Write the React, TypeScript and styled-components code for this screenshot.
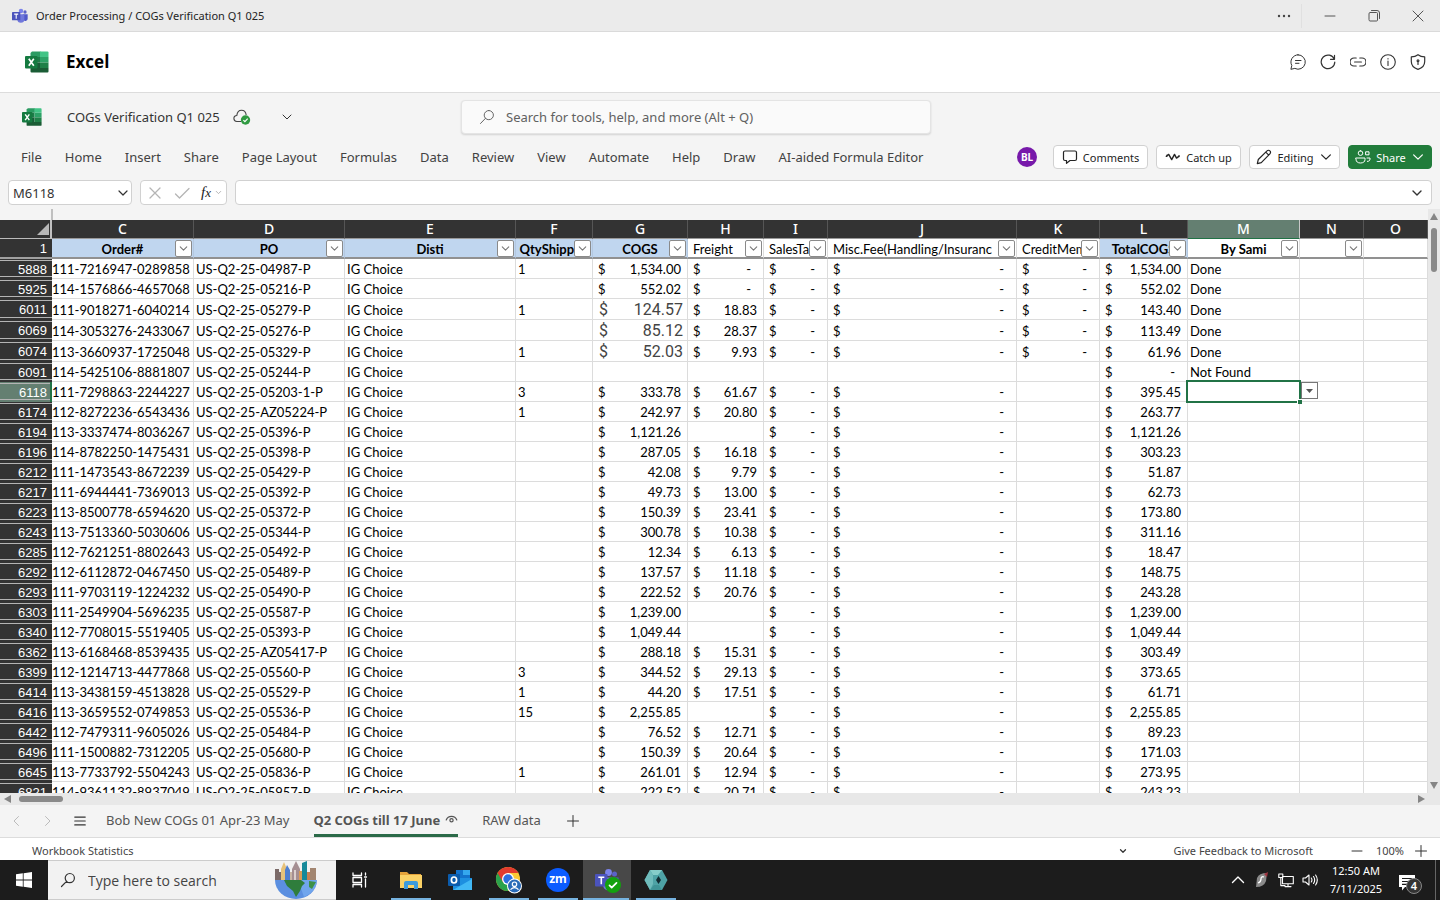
import React from "react";
import styled, { createGlobalStyle, css } from "styled-components";

const ui = `"Noto Sans", "Open Sans", sans-serif`;
const cellFont = `Lato, "Liberation Sans", sans-serif`;

const Global = createGlobalStyle`
  *, *::before, *::after { box-sizing: border-box; }
  body { margin: 0; background: #f4f4f4; font-family: ${ui}; color: #333; }
  button, input { font-family: inherit; color: inherit; }
  button { border: 0; background: none; padding: 0; cursor: pointer; }
  svg { display: block; flex: none; }
`;

/* ---------- icons ---------- */

type IconProps = { d: string; size?: number; w?: number; fill?: string; color?: string };

const Icon = ({ d, size = 16, w = 1, fill = "none", color = "currentColor" }: IconProps) => (
  <svg width={size} height={size} viewBox="0 0 16 16" fill={fill} stroke={color} strokeWidth={w} strokeLinecap="round" strokeLinejoin="round" aria-hidden>
    <path d={d} />
  </svg>
);

const paths = {
  down: "M4 6l4 4 4-4",
  wideDown: "M3 5.500l5 5 5-5",
  up: "M2.500 10.500L8 5l5.500 5.500",
  left: "M10.500 3.500L6 8l4.500 4.500",
  right: "M5.500 3.500L10 8l-4.500 4.500",
  cross: "M3 3l10 10M13 3L3 13",
  minus: "M3 8h10",
  plus: "M8 2.500v11M2.500 8h11",
  menu: "M2 3.500h12M2 8h12M2 12.500h12",
  search: "M9.800 1.500a4.600 4.600 0 1 1 0 9.200a4.600 4.600 0 0 1 0-9.200zM6.500 9.300L1.500 14.500",
  restore: "M3 5.500a1 1 0 0 1 1-1h6.500a1 1 0 0 1 1 1V12a1 1 0 0 1-1 1H4a1 1 0 0 1-1-1zM5.500 2.500H11a2.500 2.500 0 0 1 2.500 2.500v5.500",
  chat: "M8 .8a7.200 7.200 0 1 1-3.200 13.600L.9 15.300l.9-3.800A7.200 7.200 0 0 1 8 .8zM5.500 6.500h5.500M5.500 9.300h3.500",
  refresh: "M14.300 5.300A6.800 6.800 0 1 0 14.800 8M14.500 1.300v4h-4",
  link: "M6.200 4H4a4 4 0 0 0 0 8h2.200M9.800 4H12a4 4 0 0 1 0 8H9.800M4.600 8h6.800",
  info: "M8 .7a7.300 7.300 0 1 1 0 14.600A7.300 7.300 0 0 1 8 .7zM8 7v4.500M8 4.600v.3",
  shield: "M8 .7c2 1.500 4.200 2.100 6.700 2.200v4.600c0 4-2.300 6.500-6.700 7.900c-4.400-1.400-6.700-3.900-6.700-7.900V2.900C3.800 2.800 6 2.200 8 .7zM8 8v2.500M8 5.900a.9.9 0 1 1 0 1.800a.9.9 0 0 1 0-1.800z",
  comment: "M3 2h10a1.500 1.500 0 0 1 1.500 1.500v6.500a1.500 1.500 0 0 1-1.500 1.500H8L4.500 14.300v-2.800H3A1.500 1.500 0 0 1 1.500 10V3.500A1.500 1.500 0 0 1 3 2z",
  pulse: "M1.300 7.300L3.700 5.400l3 5.200L9.500 5.400l2 3.700 2.700-2M2 6.300v1M14 6.600v1",
  pencil: "M1.300 14.700l1-4.200L11 1.900a1.900 1.900 0 0 1 2.900 0a1.900 1.900 0 0 1 0 2.900L5.300 13.600zM9.800 3.200l2.900 2.900",
  check: "M1.500 9l4 4L15 3.500",
  people: "M5.500 1.800a2.300 2.300 0 1 1 0 4.600a2.300 2.300 0 0 1 0-4.600zM1 9h9v1.500c0 2.300-1.800 3.500-4.500 3.500S1 12.800 1 10.500zM11 2.800h3v3h-3zM12 9h3v1c0 1.600-1 2.400-2.600 2.400",
  eye: "M1.500 8.500a7 7 0 0 1 13 0M8 7a2 2 0 1 1 0 4a2 2 0 0 1 0-4z",
  taskview: "M1 1v2.500h8.500V1M1 15v-2.500h8.500V15M1 5.500h8.500v5H1zM13.500 1v2M13.500 7v8M12.500 5h2",
  network: "M4.500 4.500h10.800v7.300H4.500zM10 12v2.500M7 14.600h6M.8 2h4v3.500h-4zM2.800 5.600v8H7",
  speaker: "M1 6h2.500L7 3v10L3.500 10H1zM9.300 6q1.300 2 0 4M11.500 4.500q2.400 3.500 0 7M13.600 3q3.400 5 0 10",
};

const ExcelLogo = ({ size }: { size: number }) => (
  <svg width={size} height={size} viewBox="0 0 24 24" aria-label="Excel">
    <path d="M7 1.500h8.500V7H5.500V3z" fill="#2b9b62" />
    <path d="M15 1.500h7.500q1 0 1 1V7H15z" fill="#42c486" />
    <path d="M5.500 7H15v5.500H5.500z" fill="#1e7b48" />
    <path d="M15 7h8.500v5.500H15z" fill="#2da267" />
    <path d="M5.500 12.500H15V18H5.500z" fill="#185c37" />
    <path d="M15 12.500h8.500V18H15z" fill="#1f8048" />
    <path d="M5.500 18h18v3.500q0 1-1 1h-16q-1 0-1-1z" fill="#1a5c35" />
    <rect x="0" y="6" width="12.500" height="12.500" rx="1" fill="#157a40" />
    <path d="M3.800 8.800l5 7M8.800 8.800l-5 7" stroke="#fff" strokeWidth="1.700" />
  </svg>
);

const TeamsLogo = ({ size }: { size: number }) => (
  <svg width={size} height={size} viewBox="0 0 24 24" aria-label="Teams">
    <circle cx="19.500" cy="6" r="2.500" fill="#5b62c8" />
    <circle cx="13.500" cy="4.500" r="3.400" fill="#7b83eb" />
    <path d="M16 9.500h7.500v6.500a3.500 3.500 0 0 1-6 2.500z" fill="#5059c9" />
    <path d="M8 9.500h10.500v7.500a5.200 5.200 0 0 1-10.500 0z" fill="#7078dc" />
    <rect x="0" y="6" width="12.500" height="12.500" rx="1" fill="#4b53bc" />
    <path d="M3.300 9.200h6M6.300 9.200v7" stroke="#fff" strokeWidth="1.600" />
  </svg>
);

const CloudSaved = () => (
  <svg width="18" height="18" viewBox="0 0 18 18" aria-hidden>
    <path d="M8 13.500H4a3 3 0 0 1-.2-6C4.200 4 6.200 2.300 8.500 2.300S12.800 4 13.200 7" fill="none" stroke="#444" strokeWidth="1.100" />
    <circle cx="12.500" cy="12" r="4.700" fill="#2f9a41" />
    <path d="M10.400 12.200l1.500 1.500 2.800-3" fill="none" stroke="#fff" strokeWidth="1.200" />
  </svg>
);

const Globe = () => (
  <svg width="44" height="40" viewBox="0 0 44 40" aria-hidden>
    <path d="M1 20a21 19 0 0 0 42 0z" fill="#5b8fe0" />
    <path d="M24 20h19a21 19 0 0 1-13 17z" fill="#79aef2" opacity=".7" />
    <path d="M10 20h17l4 3-3 3-2 5-4 6-3-6-6-5z" fill="#2f7d3c" />
    <path d="M35 21l7 1-4 7-3-2z" fill="#3d9148" />
    <path d="M1 9h4v11H1zM5 12h3v8H5z" fill="#7b6a68" />
    <path d="M7 20V9l3-7 3 7v11z" fill="#e7c27a" />
    <path d="M11 20V10l2-5 3 5v10z" fill="#4f7fd0" />
    <path d="M16 20v-8h3v8z" fill="#c9b6a6" />
    <path d="M18 20V9l4-8 4 8v11z" fill="#a58f92" />
    <path d="M20 20V10h2v10z" fill="#dcd0cd" />
    <path d="M25 20v-9h4v9z" fill="#d99a55" />
    <path d="M28 20V3l5-2v19z" fill="#16899a" />
    <path d="M33 20V12h3v8z" fill="#c77f52" />
    <path d="M36 20V8h6v12z" fill="#a28570" />
  </svg>
);

const Folder = () => (
  <svg width="24" height="24" viewBox="0 0 24 24" aria-hidden>
    <path d="M1 4h7l2 2h12v4H1z" fill="#e5a33a" />
    <path d="M1 7h22v13H1z" fill="#fbd266" />
    <path d="M5 21v-6q0-2 2-2h10q2 0 2 2v6h-4v-4H9v4z" fill="#3d9bdc" />
  </svg>
);

const Outlook = () => (
  <svg width="26" height="24" viewBox="0 0 26 24" aria-hidden>
    <path d="M9 2h14v9H9z" fill="#1373cc" />
    <path d="M16 2h7v5h-7z" fill="#35a8ee" />
    <path d="M6 10h19v12H6z" fill="#1d8fe0" />
    <path d="M6 22l19-11v11z" fill="#41b8f5" />
    <rect x="1" y="6" width="12" height="12" rx="1" fill="#0b5cad" />
    <ellipse cx="7" cy="12" rx="2.600" ry="3" fill="none" stroke="#fff" strokeWidth="1.700" />
  </svg>
);

const Chrome = () => (
  <svg width="28" height="28" viewBox="0 0 28 28" aria-hidden>
    <circle cx="13" cy="13" r="12" fill="#fbc934" />
    <path d="M2.600 7A12 12 0 0 0 13 25l5.200-9L13 13z" fill="#2ba24c" />
    <path d="M2.600 7A12 12 0 0 1 23.400 7H13l-5.200 9z" fill="#e33b2e" />
    <circle cx="13" cy="13" r="6" fill="#fff" />
    <circle cx="13" cy="13" r="4.700" fill="#2f6fe0" />
    <circle cx="19.500" cy="20" r="7.500" fill="#fff" />
    <circle cx="19.500" cy="20" r="6.500" fill="#2b6cb8" />
    <circle cx="19.500" cy="18.200" r="2.200" fill="none" stroke="#fff" strokeWidth="1.200" />
    <path d="M15.500 23.700q4-4 8 0" fill="none" stroke="#fff" strokeWidth="1.200" />
  </svg>
);

const Hex = () => (
  <svg width="24" height="22" viewBox="0 0 24 22" aria-hidden>
    <path d="M6 1h12l5.500 10L18 21H6L.5 11z" fill="#4ea3a6" />
    <path d="M6 1h12l-4 5h-5z" fill="#86cdca" />
    <path d="M.5 11L6 1l3 5v9l-3 6z" fill="#6fbcbc" />
    <path d="M18 21H6l4-5h5z" fill="#3f9497" />
    <path d="M14.500 7l2.500 4-2.500 4-2.500-4z" fill="#122c33" />
  </svg>
);

const Windows = () => (
  <svg width="16" height="16" viewBox="0 0 16 16" fill="#fff" aria-hidden>
    <path d="M0 2.300L6.800 1.300v6.300H0zM7.600 1.200L16 0v7.600H7.600zM0 8.400h6.800v6.300L0 13.700zM7.600 8.400H16V16l-8.400-1.200z" />
  </svg>
);

const Feather = () => (
  <svg width="16" height="18" viewBox="0 0 16 18" aria-hidden>
    <path d="M2 16L3 7q2-5 10-5l-1 8q-2 6-10 6z" fill="#8a8a8a" />
    <path d="M10 3l4-2-1 5z" fill="#a03540" />
    <path d="M10 6q-3-1-3 2t-3 4" fill="none" stroke="#fff" strokeWidth="1.300" />
  </svg>
);

const Notice = () => (
  <svg width="18" height="17" viewBox="0 0 18 17" aria-hidden>
    <path d="M1 1h16v12H7l-3 3.500V13H1z" fill="#fff" />
    <path d="M4 4.500h10M4 7.500h10M4 10.300h6" stroke="#1c1c1c" strokeWidth="1.200" />
  </svg>
);

/* ---------- window chrome ---------- */

const Page = styled.div`
  display: flex;
  flex-direction: column;
  height: 100vh;
  overflow: hidden;
`;

const TitleBar = styled.header`
  display: flex;
  align-items: center;
  flex: none;
  height: 32px;
  padding: 0 6px 0 12px;
  gap: 8px;
  background: #ebebeb;
  border-bottom: 1px solid #dadada;
  font-size: 11px;
  color: #242424;
`;

const Spacer = styled.div`
  flex: 1;
`;

const WindowButtons = styled.div`
  display: flex;
  align-items: center;
  gap: 12px;
`;

const WindowButton = styled.button`
  display: flex;
  align-items: center;
  justify-content: center;
  width: 32px;
  height: 24px;
  color: #555;
`;

const MoreButton = styled(WindowButton)`
  width: 36px;
  border-right: 1px solid #e0e0e0;
`;

const AppBar = styled.div`
  display: flex;
  align-items: center;
  flex: none;
  height: 61px;
  padding: 0 14px 1px 25px;
  gap: 17px;
  background: #fff;
  border-bottom: 1px solid #dcdcdc;
`;

const AppName = styled.h1`
  margin: 0;
  font-family: "Open Sans", sans-serif;
  font-size: 17px;
  line-height: 24px;
  font-weight: 700;
  color: #000;
`;

const AppActions = styled.div`
  display: flex;
  gap: 14px;
`;

const IconButton = styled.button<{ $w?: number; $tone?: string }>`
  display: flex;
  align-items: center;
  justify-content: center;
  width: ${(p) => p.$w ?? 16}px;
  height: 16px;
  color: ${(p) => p.$tone ?? "#333"};
`;

const DocBar = styled.div`
  display: grid;
  grid-template-columns: 1fr 470px 1fr;
  align-items: center;
  flex: none;
  height: 49px;
  padding: 0 70px 1px 22px;
`;

const DocInfo = styled.div`
  display: flex;
  align-items: center;
  font-size: 13px;
  color: #333;
`;

const DocName = styled.span`
  margin: 0 13px 0 25px;
  white-space: nowrap;
`;

const DocMenu = styled(IconButton)`
  margin-left: 28px;
`;

const SearchBox = styled.label`
  display: flex;
  align-items: center;
  gap: 11px;
  height: 34px;
  padding: 0 17px;
  border: 1px solid #e4e4e4;
  border-radius: 4px;
  background: #fafafa;
  box-shadow: 0 1px 2px rgba(0, 0, 0, 0.14);
  color: #666;
`;

const PlainInput = styled.input<{ $size: number }>`
  flex: 1;
  min-width: 0;
  padding: 0;
  border: 0;
  outline: 0;
  background: transparent;
  font-size: ${(p) => p.$size}px;
  &::placeholder { color: #616161; opacity: 1; }
`;

const Ribbon = styled.div`
  display: flex;
  align-items: center;
  flex: none;
  height: 30px;
  padding: 0 8px 0 21px;
  gap: 8px;
`;

const RibbonTabs = styled.nav`
  display: flex;
  gap: 23px;
  flex: 1;
`;

const RibbonTab = styled.button`
  font-size: 13px;
  color: #424242;
  white-space: nowrap;
`;

const Avatar = styled.span`
  display: flex;
  align-items: center;
  justify-content: center;
  width: 20px;
  height: 20px;
  margin-right: 8px;
  border-radius: 50%;
  background: #7719aa;
  color: #fff;
  font-size: 10px;
  font-weight: 700;
`;

const ActionButton = styled.button<{ $w: number; $primary?: boolean }>`
  display: flex;
  align-items: center;
  justify-content: center;
  gap: 5px;
  width: ${(p) => p.$w}px;
  height: 24px;
  border: 1px solid #d1d1d1;
  border-radius: 4px;
  background: #fff;
  font-size: 11px;
  color: #242424;
  white-space: nowrap;
  ${(p) =>
    p.$primary &&
    css`
      background: #217c3b;
      border-color: #217c3b;
      color: #fff;
    `}
`;

const FormulaRow = styled.div`
  display: flex;
  flex: none;
  gap: 8px;
  padding: 8px 8px 4px;
`;

const Box = styled.div<{ $w?: number }>`
  display: flex;
  align-items: center;
  height: 25px;
  ${(p) => (p.$w ? `width: ${p.$w}px;` : "flex: 1;")}
  padding: 0 4px;
  border: 1px solid #d1d1d1;
  border-radius: 4px;
  background: #fff;
`;

const FxTools = styled(Box)`
  gap: 11px;
  padding: 0 2px 0 6px;
`;

const FxGroup = styled.span`
  display: flex;
  align-items: center;
  gap: 2px;
`;

const Fx = styled.span`
  font-family: "Liberation Serif", serif;
  font-style: italic;
  font-size: 15px;
  line-height: 16px;
  color: #222;
  small { font-size: 13px; }
`;

/* ---------- grid ---------- */

const SheetArea = styled.main`
  display: flex;
  flex: 1;
  min-height: 0;
`;

const SheetPane = styled.div`
  flex: 1;
  min-width: 0;
  overflow: hidden;
`;

const FreezeStub = styled.div`
  width: 53px;
  height: 11px;
  border-right: 2px solid #c0c0c0;
`;

const Sheet = styled.table`
  width: 100%;
  table-layout: fixed;
  border-collapse: separate;
  border-spacing: 0;
  background: #fff;
  font-family: ${cellFont};
  font-size: 13px;
  line-height: 16px;
  color: #000;
`;

const ColLetter = styled.th<{ $on?: boolean }>`
  height: 19px;
  padding: 0;
  background: ${(p) => (p.$on ? "#647f71" : "#333")};
  border-right: 1px solid ${(p) => (p.$on ? "#c8c8c8" : "#555")};
  border-bottom: 1px solid ${(p) => (p.$on ? "#217346" : "#999")};
  color: #fff;
  font-family: ${ui};
  font-size: 14px;
  font-weight: 500;
`;

const Corner = styled.th`
  padding: 0;
  background: #333;
  border-right: 2px solid #c0c0c0;
  border-bottom: 1px solid #bbb;
  svg { margin-left: auto; }
`;

const RowNumber = styled.th<{ $on?: boolean; $top?: boolean }>`
  padding: 1px ${(p) => (p.$on ? 3 : 5)}px 0 0;
  text-align: right;
  color: #fff;
  font-family: "Liberation Sans", Arial, sans-serif;
  font-size: 13px;
  font-weight: 400;
  background-color: ${(p) => (p.$on ? "#647f71" : "#333")};
  ${(p) =>
    p.$top
      ? css`
          border-bottom: 2px solid #a0a0a0;
        `
      : css`
          background-image: linear-gradient(#b4b4b4, #b4b4b4), linear-gradient(#b4b4b4, #b4b4b4);
          background-size: 100% 1px;
          background-repeat: no-repeat;
          background-position: 0 1px, 0 calc(100% - 2px);
        `}
  ${(p) => p.$on && "border-right: 2px solid #217346;"}
`;

const HeadCell = styled.td<{ $fill?: boolean; $bold?: boolean }>`
  position: relative;
  height: 20px;
  padding: 1px 0 0 5px;
  overflow: hidden;
  white-space: nowrap;
  border-right: 1px solid ${(p) => (p.$fill ? "#b4c8e0" : "#dcdcdc")};
  border-bottom: 2px solid #919191;
  background: ${(p) => (p.$fill ? "#c0d6ef" : "#fff")};
  ${(p) =>
    p.$bold &&
    css`
      padding: 1px 0 0;
      text-align: center;
      font-weight: 700;
    `}
`;

const FilterButton = styled.button`
  position: absolute;
  right: 1px;
  top: 1px;
  display: flex;
  align-items: center;
  justify-content: center;
  width: 17px;
  height: 17px;
  border: 1px solid #8a8a8a;
  border-radius: 2px;
  background: #fff;
  color: #777;
`;

const Row = styled.tr<{ $h: number }>`
  height: ${(p) => p.$h}px;
`;

const Cell = styled.td<{ $right?: boolean; $flush?: boolean; $visible?: boolean }>`
  position: relative;
  padding: ${(p) => (p.$flush ? "0 0 1px" : p.$right ? "0 4px 1px 0" : "0 0 1px 2px")};
  text-align: ${(p) => (p.$right ? "right" : "left")};
  vertical-align: bottom;
  white-space: nowrap;
  overflow: ${(p) => (p.$visible ? "visible" : "hidden")};
  border-right: 1px solid #dcdcdc;
  border-bottom: 1px solid #dcdcdc;
`;

const Money = styled.div<{ $dash?: boolean; $big?: boolean }>`
  display: flex;
  justify-content: space-between;
  padding: 0 ${(p) => (p.$dash ? 12 : 6)}px 0 5px;
  ${(p) =>
    p.$big &&
    css`
      padding: 0 4px 0 6px;
      font-family: Roboto, sans-serif;
      font-size: 16px;
      color: #444;
    `}
`;

const Selection = styled.div`
  position: absolute;
  z-index: 1;
  inset: -2px;
  border: 2px solid #217346;
  &::after {
    content: "";
    position: absolute;
    right: -3px;
    bottom: -3px;
    width: 5px;
    height: 5px;
    background: #217346;
    border: 1px solid #fff;
    border-width: 1px 0 0 1px;
  }
`;

const PickButton = styled.button`
  position: absolute;
  z-index: 2;
  left: calc(100% + 2px);
  top: 0;
  display: flex;
  align-items: center;
  justify-content: center;
  width: 17px;
  height: 17px;
  border: 1px solid #777;
  background: #fff;
`;

const Track = styled.div<{ $row?: boolean }>`
  display: flex;
  flex: none;
  flex-direction: ${(p) => (p.$row ? "row" : "column")};
  align-items: center;
  justify-content: space-between;
  ${(p) => (p.$row ? "height: 12px; padding: 0 15px 0 4px;" : "width: 12px; padding: 4px 0;")}
  background: #e8e8e8;
`;

const TrackStart = styled(Track)`
  padding: 0;
  gap: 7px;
  background: none;
`;

const Thumb = styled.div<{ $row?: boolean }>`
  width: ${(p) => (p.$row ? 44 : 6)}px;
  height: ${(p) => (p.$row ? 6 : 44)}px;
  border-radius: 3px;
  background: #8a8a8a;
`;

const Arrow = ({ d }: { d: string }) => (
  <svg width="8" height="8" viewBox="0 0 8 8" fill="#858585" aria-hidden>
    <path d={d} />
  </svg>
);

/* ---------- footer ---------- */

const TabBar = styled.div`
  display: flex;
  align-items: center;
  flex: none;
  height: 33px;
  padding: 0 8px;
  border-bottom: 1px solid #dcdcdc;
`;

const TabNav = styled.div`
  display: flex;
  align-items: center;
  gap: 16px;
  margin-right: 18px;
`;

const SheetTab = styled.button<{ $on?: boolean }>`
  display: flex;
  align-items: center;
  gap: 5px;
  height: 32px;
  margin-right: 24px;
  border-bottom: 3px solid ${(p) => (p.$on ? "#2b6a48" : "transparent")};
  font-size: 13px;
  font-weight: ${(p) => (p.$on ? 700 : 400)};
  color: #555;
  white-space: nowrap;
`;

const StatusBar = styled.div`
  display: flex;
  align-items: center;
  flex: none;
  height: 22px;
  padding: 3px 11px 0 32px;
  background: #fff;
  font-size: 11px;
  color: #444;
`;

const StatusLink = styled.button`
  margin: 0 36px 0 46px;
  font-size: 11px;
`;

const Zoom = styled.span`
  margin: 0 9px 0 11px;
`;

const Taskbar = styled.footer`
  display: flex;
  flex: none;
  height: 40px;
  background: #1c1c1c;
  color: #fff;
`;

const TaskButton = styled.button<{ $open?: boolean; $active?: boolean }>`
  position: relative;
  display: flex;
  align-items: center;
  justify-content: center;
  width: 48px;
  height: 40px;
  background: ${(p) => (p.$active ? "#484848" : "none")};
  ${(p) =>
    p.$open &&
    css`
      &::after {
        content: "";
        position: absolute;
        left: ${p.$active ? 0 : 4}px;
        right: ${p.$active ? 2 : 4}px;
        bottom: 0;
        height: 2px;
        background: #76b3e0;
      }
    `}
`;

const Apps = styled.div`
  display: flex;
  gap: 1px;
  margin-left: 3px;
`;

const TaskSearch = styled.label`
  display: flex;
  align-items: center;
  width: 288px;
  gap: 12px;
  padding: 0 18px 0 12px;
  background: #f2f2f2;
  border: 1px solid #ccc;
  border-width: 1px 0;
  font-family: "Open Sans", sans-serif;
  color: #333;
  input::placeholder { color: #444; }
`;

const Tray = styled.div`
  display: flex;
  align-items: center;
  gap: 8px;
`;

const Clock = styled.div`
  width: 60px;
  text-align: center;
  font-size: 11px;
  line-height: 18px;
`;

const NoticeButton = styled.button`
  position: relative;
  width: 24px;
  height: 24px;
  margin: 0 13px 0 4px;
  padding-top: 4px;
`;

const NoticeCount = styled.span`
  position: absolute;
  left: 8px;
  top: 10px;
  width: 16px;
  height: 16px;
  border: 1px solid #888;
  border-radius: 50%;
  background: #333;
  color: #fff;
  font-size: 11px;
  line-height: 14px;
  font-weight: 600;
  text-align: center;
`;

const DesktopEdge = styled.div`
  width: 5px;
  border-left: 1px solid #666;
`;

const ZoomMark = styled.span`
  display: flex;
  align-items: center;
  justify-content: center;
  width: 24px;
  height: 24px;
  border-radius: 50%;
  background: #0b5cff;
  font-size: 12px;
  font-weight: 700;
  line-height: 20px;
  padding-bottom: 3px;
`;

const Presence = styled.span`
  position: absolute;
  left: 22px;
  top: 17px;
  display: flex;
  align-items: center;
  justify-content: center;
  width: 16px;
  height: 16px;
  border-radius: 50%;
  background: #13a10e;
`;

/* ---------- data ---------- */

const menu = ["File", "Home", "Insert", "Share", "Page Layout", "Formulas", "Data", "Review", "View", "Automate", "Help", "Draw", "AI-aided Formula Editor"];

const columns: { letter: string; width?: number; title: string; fill?: boolean; bold?: boolean; filter?: boolean }[] = [
  { letter: "C", width: 142, title: "Order#", fill: true, bold: true, filter: true },
  { letter: "D", width: 151, title: "PO", fill: true, bold: true, filter: true },
  { letter: "E", width: 171, title: "Disti", fill: true, bold: true, filter: true },
  { letter: "F", width: 77, title: "QtyShipped", fill: true, bold: true, filter: true },
  { letter: "G", width: 95, title: "COGS", fill: true, bold: true, filter: true },
  { letter: "H", width: 76, title: "Freight", filter: true },
  { letter: "I", width: 64, title: "SalesTax", filter: true },
  { letter: "J", width: 189, title: "Misc.Fee(Handling/Insuranc", filter: true },
  { letter: "K", width: 83, title: "CreditMemo", filter: true },
  { letter: "L", width: 88, title: "TotalCOGS", fill: true, bold: true, filter: true },
  { letter: "M", width: 112, title: "By Sami", bold: true, filter: true },
  { letter: "N", width: 64, title: "", filter: true },
  { letter: "O", title: "" },
];

// row, order, po, qty, cogs, freight, salesTax, misc, credit, total, by
const rows: string[][] = [
  ["5888", "111-7216947-0289858", "04987-P", "1", "1,534.00", "-", "-", "-", "-", "1,534.00", "Done"],
  ["5925", "114-1576866-4657068", "05216-P", "", "552.02", "-", "-", "-", "-", "552.02", "Done"],
  ["6011", "111-9018271-6040214", "05279-P", "1", "124.57", "18.83", "-", "-", "-", "143.40", "Done"],
  ["6069", "114-3053276-2433067", "05276-P", "", "85.12", "28.37", "-", "-", "-", "113.49", "Done"],
  ["6074", "113-3660937-1725048", "05329-P", "1", "52.03", "9.93", "-", "-", "-", "61.96", "Done"],
  ["6091", "114-5425106-8881807", "05244-P", "", "", "", "", "", "", "-", "Not Found"],
  ["6118", "111-7298863-2244227", "05203-1-P", "3", "333.78", "61.67", "-", "-", "", "395.45", ""],
  ["6174", "112-8272236-6543436", "AZ05224-P", "1", "242.97", "20.80", "-", "-", "", "263.77", ""],
  ["6194", "113-3337474-8036267", "05396-P", "", "1,121.26", "", "-", "-", "", "1,121.26", ""],
  ["6196", "114-8782250-1475431", "05398-P", "", "287.05", "16.18", "-", "-", "", "303.23", ""],
  ["6212", "111-1473543-8672239", "05429-P", "", "42.08", "9.79", "-", "-", "", "51.87", ""],
  ["6217", "111-6944441-7369013", "05392-P", "", "49.73", "13.00", "-", "-", "", "62.73", ""],
  ["6223", "113-8500778-6594620", "05372-P", "", "150.39", "23.41", "-", "-", "", "173.80", ""],
  ["6243", "113-7513360-5030606", "05344-P", "", "300.78", "10.38", "-", "-", "", "311.16", ""],
  ["6285", "112-7621251-8802643", "05492-P", "", "12.34", "6.13", "-", "-", "", "18.47", ""],
  ["6292", "112-6112872-0467450", "05489-P", "", "137.57", "11.18", "-", "-", "", "148.75", ""],
  ["6293", "111-9703119-1224232", "05490-P", "", "222.52", "20.76", "-", "-", "", "243.28", ""],
  ["6303", "111-2549904-5696235", "05587-P", "", "1,239.00", "", "-", "-", "", "1,239.00", ""],
  ["6340", "112-7708015-5519405", "05393-P", "", "1,049.44", "", "-", "-", "", "1,049.44", ""],
  ["6362", "113-6168468-8539435", "AZ05417-P", "", "288.18", "15.31", "-", "-", "", "303.49", ""],
  ["6399", "112-1214713-4477868", "05560-P", "3", "344.52", "29.13", "-", "-", "", "373.65", ""],
  ["6414", "113-3438159-4513828", "05529-P", "1", "44.20", "17.51", "-", "-", "", "61.71", ""],
  ["6416", "113-3659552-0749853", "05536-P", "15", "2,255.85", "", "-", "-", "", "2,255.85", ""],
  ["6442", "112-7479311-9605026", "05484-P", "", "76.52", "12.71", "-", "-", "", "89.23", ""],
  ["6496", "111-1500882-7312205", "05680-P", "", "150.39", "20.64", "-", "-", "", "171.03", ""],
  ["6645", "113-7733792-5504243", "05836-P", "1", "261.01", "12.94", "-", "-", "", "273.95", ""],
  ["6821", "114-9361132-8937049", "05957-P", "", "222.52", "20.71", "-", "-", "", "243.23", ""],
];

const tallRows = ["6011", "6069", "6074"];
const activeRow = "6118";
const activeColumn = "M";

const MoneyCell = ({ value, big }: { value: string; big?: boolean }) => (
  <Cell $flush>
    {value && (
      <Money $dash={value === "-"} $big={big}>
        <span>$</span>
        <span>{value}</span>
      </Money>
    )}
  </Cell>
);

export default function App() {
  return (
    <Page>
      <Global />
      <TitleBar>
        <TeamsLogo size={16} />
        <span>Order Processing / COGs Verification Q1 025</span>
        <Spacer />
        <WindowButtons>
          <MoreButton aria-label="More">
            <svg width="16" height="16" viewBox="0 0 16 16" fill="#444" aria-hidden>
              <circle cx="3" cy="8" r="1.200" />
              <circle cx="8" cy="8" r="1.200" />
              <circle cx="13" cy="8" r="1.200" />
            </svg>
          </MoreButton>
          <WindowButton aria-label="Minimize"><Icon d={paths.minus} /></WindowButton>
          <WindowButton aria-label="Restore"><Icon d={paths.restore} /></WindowButton>
          <WindowButton aria-label="Close"><Icon d={paths.cross} /></WindowButton>
        </WindowButtons>
      </TitleBar>

      <AppBar>
        <ExcelLogo size={24} />
        <AppName>Excel</AppName>
        <Spacer />
        <AppActions>
          <IconButton aria-label="Chat"><Icon d={paths.chat} /></IconButton>
          <IconButton aria-label="Reload"><Icon d={paths.refresh} w={1.2} /></IconButton>
          <IconButton aria-label="Copy link"><Icon d={paths.link} w={1.2} /></IconButton>
          <IconButton aria-label="About"><Icon d={paths.info} w={1.1} /></IconButton>
          <IconButton aria-label="Privacy"><Icon d={paths.shield} w={1.2} /></IconButton>
        </AppActions>
      </AppBar>

      <DocBar>
        <DocInfo>
          <ExcelLogo size={20} />
          <DocName>COGs Verification Q1 025</DocName>
          <CloudSaved />
          <DocMenu aria-label="File details"><Icon d={paths.down} /></DocMenu>
        </DocInfo>
        <SearchBox>
          <Icon d={paths.search} />
          <PlainInput $size={13} placeholder="Search for tools, help, and more (Alt + Q)" aria-label="Search" />
        </SearchBox>
      </DocBar>

      <Ribbon>
        <RibbonTabs>
          {menu.map((m) => (
            <RibbonTab key={m}>{m}</RibbonTab>
          ))}
        </RibbonTabs>
        <Avatar>BL</Avatar>
        <ActionButton $w={95}><Icon d={paths.comment} w={1.2} />Comments</ActionButton>
        <ActionButton $w={85}><Icon d={paths.pulse} w={1.4} />Catch up</ActionButton>
        <ActionButton $w={91}><Icon d={paths.pencil} w={1.2} />Editing<Icon d={paths.wideDown} size={14} w={1.4} /></ActionButton>
        <ActionButton $w={84} $primary><Icon d={paths.people} />Share<Icon d={paths.wideDown} size={14} w={1.4} /></ActionButton>
      </Ribbon>

      <FormulaRow>
        <Box $w={124}>
          <PlainInput $size={13} defaultValue="M6118" aria-label="Name box" />
          <IconButton aria-label="Names" $w={8}><Icon d={paths.down} w={1.2} /></IconButton>
        </Box>
        <FxTools $w={87}>
          <IconButton aria-label="Cancel" $tone="#b5b5b5"><Icon d={paths.cross} w={1.3} /></IconButton>
          <IconButton aria-label="Enter" $tone="#b5b5b5"><Icon d={paths.check} w={1.3} /></IconButton>
          <FxGroup>
            <Fx>f<small>x</small></Fx>
            <IconButton aria-label="Functions" $w={12} $tone="#aaa"><Icon d={paths.down} size={9} w={1.5} /></IconButton>
          </FxGroup>
        </FxTools>
        <Box>
          <PlainInput $size={13} aria-label="Formula bar" />
          <IconButton aria-label="Expand" $w={20}><Icon d={paths.down} w={1.4} /></IconButton>
        </Box>
      </FormulaRow>

      <SheetArea>
        <SheetPane>
          <FreezeStub />
          <Sheet>
            <colgroup>
              <col width={52} />
              {columns.map((c) => (
                <col key={c.letter} width={c.width} />
              ))}
            </colgroup>
            <thead>
              <tr>
                <Corner>
                  <svg width="13" height="14" viewBox="0 0 13 14" aria-hidden><path d="M12 1v12H0z" fill="#b8b8b8" /></svg>
                </Corner>
                {columns.map((c) => (
                  <ColLetter key={c.letter} $on={c.letter === activeColumn}>{c.letter}</ColLetter>
                ))}
              </tr>
            </thead>
            <tbody>
              <Row $h={20}>
                <RowNumber $top>1</RowNumber>
                {columns.map((c) => (
                  <HeadCell key={c.letter} $fill={c.fill} $bold={c.bold}>
                    {c.title}
                    {c.filter && <FilterButton aria-label={`Filter ${c.letter}`}><Icon d={paths.down} size={13} w={1.3} /></FilterButton>}
                  </HeadCell>
                ))}
              </Row>
              {rows.map(([n, order, po, qty, cogs, freight, tax, misc, credit, total, by]) => (
                <Row key={n} $h={tallRows.includes(n) ? 21 : 20}>
                  <RowNumber $on={n === activeRow}>{n}</RowNumber>
                  <Cell $right>{order}</Cell>
                  <Cell>{`US-Q2-25-${po}`}</Cell>
                  <Cell>IG Choice</Cell>
                  <Cell>{qty}</Cell>
                  <MoneyCell value={cogs} big={tallRows.includes(n)} />
                  <MoneyCell value={freight} />
                  <MoneyCell value={tax} />
                  <MoneyCell value={misc} />
                  <MoneyCell value={credit} />
                  <MoneyCell value={total} />
                  <Cell $visible={n === activeRow}>
                    {by}
                    {n === activeRow && (
                      <>
                        <Selection />
                        <PickButton aria-label="Pick from list">
                          <svg width="7" height="4" viewBox="0 0 7 4" aria-hidden><path d="M0 0h7L3.500 4z" fill="#555" /></svg>
                        </PickButton>
                      </>
                    )}
                  </Cell>
                  <Cell />
                  <Cell />
                </Row>
              ))}
            </tbody>
          </Sheet>
        </SheetPane>
        <Track>
          <TrackStart>
            <Arrow d="M4 0l4 7H0z" />
            <Thumb />
          </TrackStart>
          <Arrow d="M4 8l4-7H0z" />
        </Track>
      </SheetArea>
      <Track $row>
        <TrackStart $row>
          <Arrow d="M0 4l7-4v8z" />
          <Thumb $row />
        </TrackStart>
        <Arrow d="M8 4L1 0v8z" />
      </Track>

      <TabBar>
        <TabNav>
          <IconButton aria-label="Previous sheet" $tone="#bbb"><Icon d={paths.left} /></IconButton>
          <IconButton aria-label="Next sheet" $tone="#bbb"><Icon d={paths.right} /></IconButton>
          <IconButton aria-label="All sheets"><Icon d={paths.menu} size={14} w={1.3} /></IconButton>
        </TabNav>
        <SheetTab>Bob New COGs 01 Apr-23 May</SheetTab>
        <SheetTab $on>Q2 COGs till 17 June<Icon d={paths.eye} size={13} w={1.5} /></SheetTab>
        <SheetTab>RAW data</SheetTab>
        <IconButton aria-label="Add sheet"><Icon d={paths.plus} /></IconButton>
      </TabBar>

      <StatusBar>
        <span>Workbook Statistics</span>
        <Spacer />
        <IconButton aria-label="More status" $w={8}><Icon d={paths.down} size={10} w={2} /></IconButton>
        <StatusLink>Give Feedback to Microsoft</StatusLink>
        <IconButton aria-label="Zoom out"><Icon d={paths.minus} /></IconButton>
        <Zoom>100%</Zoom>
        <IconButton aria-label="Zoom in"><Icon d={paths.plus} /></IconButton>
      </StatusBar>

      <Taskbar>
        <TaskButton aria-label="Start"><Windows /></TaskButton>
        <TaskSearch>
          <Icon d={paths.search} w={1.2} />
          <PlainInput $size={14} placeholder="Type here to search" aria-label="Taskbar search" />
          <Globe />
        </TaskSearch>
        <TaskButton aria-label="Task view"><Icon d={paths.taskview} w={1.3} /></TaskButton>
        <Apps>
          <TaskButton $open aria-label="File Explorer"><Folder /></TaskButton>
          <TaskButton aria-label="Outlook"><Outlook /></TaskButton>
          <TaskButton $open aria-label="Chrome"><Chrome /></TaskButton>
          <TaskButton $open aria-label="Zoom"><ZoomMark>zm</ZoomMark></TaskButton>
          <TaskButton $open $active aria-label="Teams">
            <TeamsLogo size={24} />
            <Presence><Icon d="M4 8.500l2.500 2.500L12 5.500" size={14} w={2} color="#fff" /></Presence>
          </TaskButton>
          <TaskButton $open aria-label="Viewer"><Hex /></TaskButton>
        </Apps>
        <Spacer />
        <Tray>
          <Icon d={paths.up} w={1.4} />
          <Feather />
          <Icon d={paths.network} w={1.1} />
          <Icon d={paths.speaker} w={1.1} />
          <Clock>12:50 AM<br />7/11/2025</Clock>
          <NoticeButton aria-label="Notifications">
            <Notice />
            <NoticeCount>4</NoticeCount>
          </NoticeButton>
        </Tray>
        <DesktopEdge />
      </Taskbar>
    </Page>
  );
}
